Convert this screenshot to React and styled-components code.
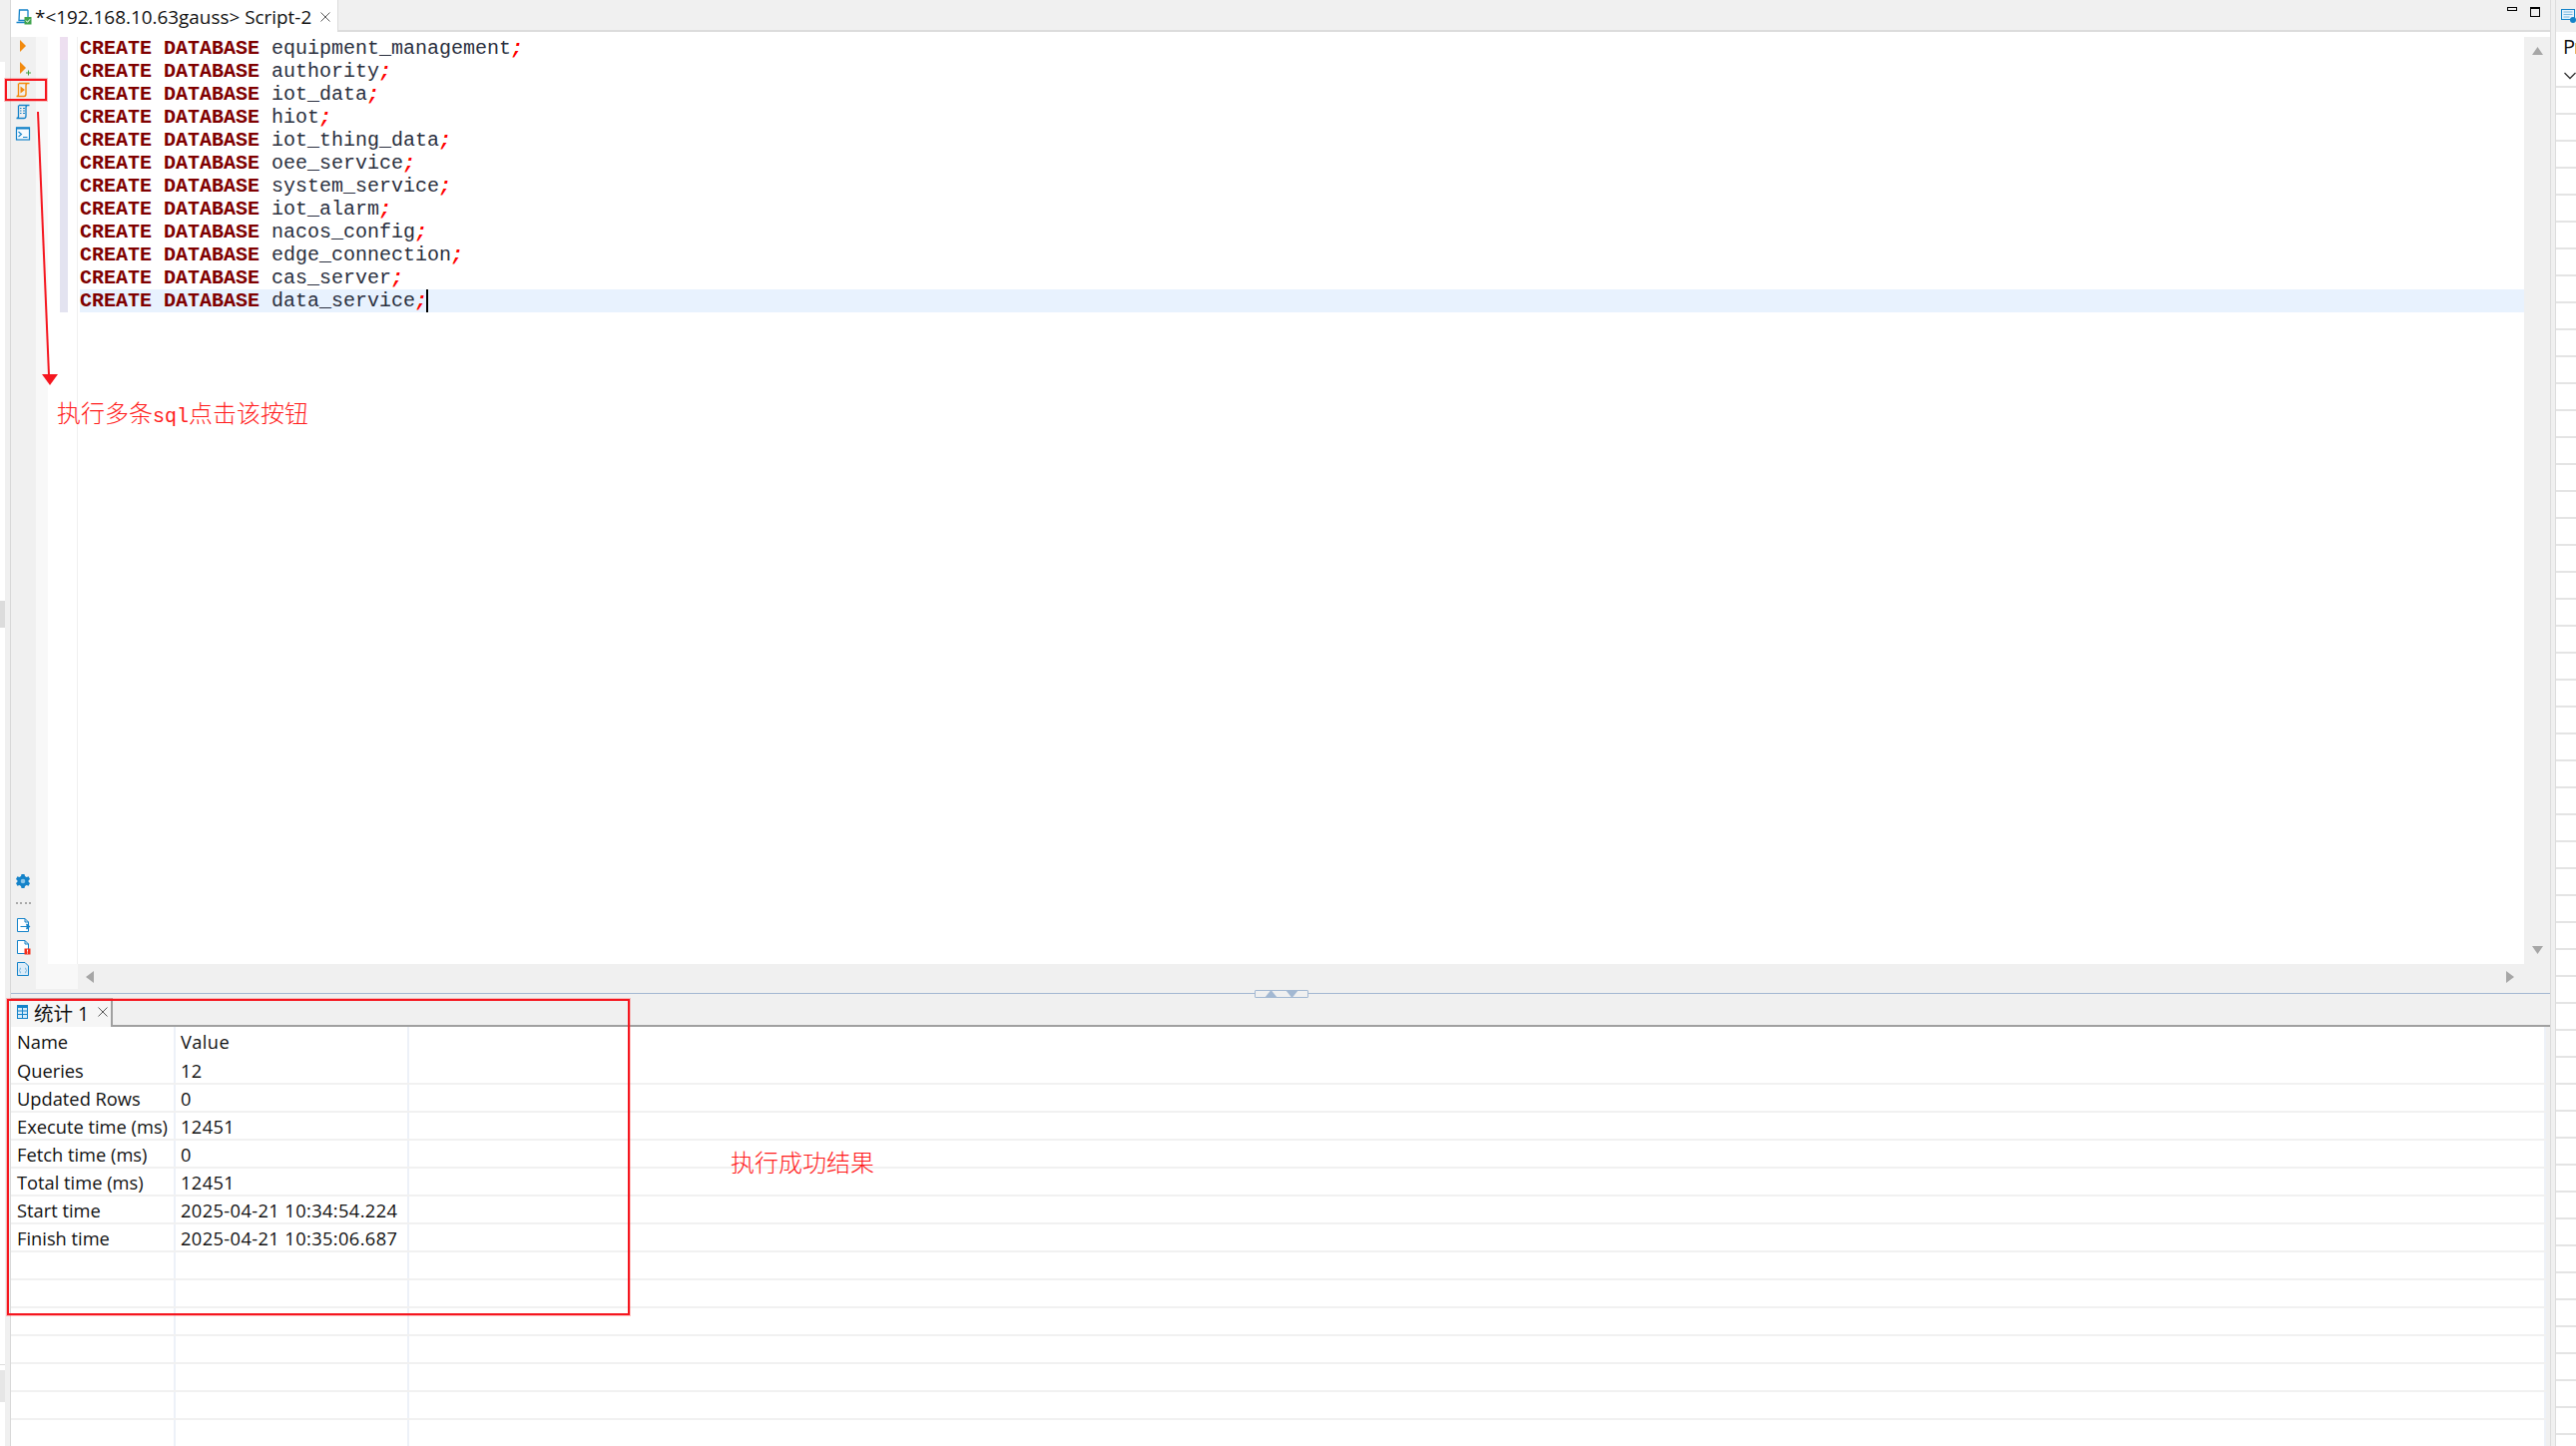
import React from "react";
import styled, { createGlobalStyle } from "styled-components";

const GlobalStyle = createGlobalStyle`
  html, body {
    margin: 0;
    padding: 0;
    background: #fff;
  }
  #root {
    width: 2581px;
    height: 1449px;
  }
`;

const UI_FONT = `"Open Sans", "Noto Sans CJK SC", sans-serif`;

const Page = styled.div`
  position: relative;
  display: flex;
  width: 2581px;
  height: 1449px;
  overflow: hidden;
  background: #fff;
  font-family: ${UI_FONT};
  color: #111;
`;

/* left window edge */
const LeftEdge = styled.div`
  display: flex;
  flex: 0 0 11px;
  box-sizing: border-box;
  background: #f0f0f0;
  border-right: 1px solid #d8d8d8;
`;
const EdgeTabs = styled.div`
  display: flex;
  flex-direction: column;
  flex: 0 0 5px;
  background: #fff;
`;
const EdgeTop = styled.div`
  height: 62px;
  background: #f0f0f0;
`;
const EdgeTab = styled.div`
  height: ${(p) => p.$h}px;
  margin-top: ${(p) => p.$top}px;
  background: ${(p) => p.$color};
  border-top: ${(p) => (p.$ruled ? "1px solid #dcdcdc" : "none")};
`;

/* main column */
const Main = styled.div`
  display: flex;
  flex-direction: column;
  flex: 0 0 2544px;
  height: 1449px;
`;

const TabBar = styled.div`
  display: flex;
  height: 32px;
  box-sizing: border-box;
  background: #f0f0f0;
  border-bottom: 2px solid #dcdcdc;
`;
const ScriptTab = styled.div`
  display: flex;
  align-items: center;
  width: 328px;
  height: 32px;
  box-sizing: border-box;
  padding: 1px 0 0 5px;
  background: #fff;
  border-right: 1px solid #dcdcdc;
  font-size: 18.9px;
  white-space: nowrap;
  span {
    margin-left: 3px;
  }
  svg:last-child {
    margin-left: 9px;
  }
`;
const WindowButtons = styled.div`
  display: flex;
  align-items: flex-start;
  gap: 13px;
  margin-left: auto;
  padding: 7px 10px 0 0;
`;
const MinButton = styled.i`
  display: block;
  width: 10px;
  height: 4px;
  box-sizing: border-box;
  border: 1px solid #000;
`;
const MaxButton = styled.i`
  display: block;
  width: 10px;
  height: 10px;
  box-sizing: border-box;
  border: 1px solid #000;
  border-top-width: 2px;
`;

const EditorBody = styled.div`
  display: flex;
  height: 958px;
  margin-top: 5px;
`;
const Toolbar = styled.div`
  display: flex;
  flex-direction: column;
  align-items: center;
  flex: 0 0 25px;
  gap: 6px;
  box-sizing: border-box;
  padding: 1px 1px 16px 0;
  background: #f0f0f0;
`;
const ToolIcon = styled.svg`
  display: block;
  width: 16px;
  height: 16px;
  flex: none;
`;
const BottomTools = styled.div`
  display: flex;
  flex-direction: column;
  align-items: center;
  gap: 6px;
  margin-top: auto;
`;
const Dots = styled.div`
  width: 15px;
  height: 2px;
  margin: 7px 0 7px;
  background: repeating-linear-gradient(90deg, #a8a8a8 0 2px, transparent 2px 4.4px);
`;

const EditorColumn = styled.div`
  display: flex;
  flex-direction: column;
  flex: 1;
  min-width: 0;
`;
const EditorArea = styled.div`
  display: flex;
  height: 929px;
`;
const Ruler = styled.div`
  flex: 0 0 12px;
  background: #f8f8f8;
`;
const Annotations = styled.div`
  flex: 0 0 29px;
  box-sizing: border-box;
  padding-left: 12px;
  background: #fff;
`;
const Marker = styled.div`
  width: 8px;
  height: ${(p) => p.$h}px;
  background: ${(p) => p.$color};
`;
const Code = styled.div`
  flex: 1;
  min-width: 0;
  box-sizing: border-box;
  padding-left: 2px;
  background: #fff;
  border-left: 1px solid #f0f0f0;
  font-family: "Liberation Mono", monospace;
  font-size: 20px;
  line-height: 23px;
  color: #2b3040;
`;
const CodeLine = styled.div`
  display: flex;
  height: 23px;
  white-space: pre;
  background: ${(p) => (p.$current ? "#e8f2fe" : "transparent")};
`;
const Keyword = styled.b`
  font-weight: 700;
  color: #7f0000;
`;
const Semi = styled.b`
  font-weight: 700;
  font-style: italic;
  color: #ff0000;
`;
const Caret = styled.i`
  width: 2px;
  height: 23px;
  margin-left: -1px;
  background: #000;
`;
const VScroll = styled.div`
  display: flex;
  flex-direction: column;
  align-items: center;
  justify-content: space-between;
  flex: 0 0 26px;
  box-sizing: border-box;
  padding: 10px 0 10px;
  background: #f0f0f0;
`;
const HBar = styled.div`
  display: flex;
  height: 29px;
  background: #f0f0f0;
`;
const HCorner = styled.div`
  flex: 0 0 42px;
  height: 25px;
  background: #f8f8f8;
`;
const HTrack = styled.div`
  display: flex;
  align-items: center;
  justify-content: space-between;
  flex: 0 0 2451px;
  box-sizing: border-box;
  padding: 0 10px 0 8px;
  height: 26px;
`;

const Sash = styled.div`
  position: relative;
  height: 1px;
  background: #a3b8d2;
  flex: none;
`;
const SashHandle = styled.div`
  position: absolute;
  left: 1246px;
  top: -3px;
  display: flex;
  align-items: center;
  justify-content: space-around;
  width: 54px;
  height: 8px;
  box-sizing: border-box;
  padding: 0 5px;
  background: #f0f0f0;
  border: 1px solid #a3b8d2;
  border-radius: 1px;
`;

const ResultTabs = styled.div`
  display: flex;
  align-items: flex-end;
  flex: none;
  height: 33px;
  box-sizing: border-box;
  background: #f0f0f0;
  border-bottom: 2px solid #a0a0a0;
`;
const ResultTab = styled.div`
  display: flex;
  align-items: center;
  width: 102px;
  height: 29px;
  margin-bottom: -2px;
  box-sizing: border-box;
  padding: 0 0 2px 6px;
  background: #f6f6f6;
  border-top: 1px solid #b4b4b4;
  border-right: 2px solid #a0a0a0;
  font-size: 19.5px;
  white-space: nowrap;
  span {
    margin-left: 6px;
  }
  svg:last-child {
    margin-left: 9px;
  }
`;

const ResultPane = styled.div`
  flex: 1;
  min-height: 0;
  overflow: hidden;
  background: #f0f0f0;
`;
const Table = styled.div`
  width: 2540px;
  height: 100%;
  background: #fff;
  font-size: 18.3px;
  color: #111;
`;
const Row = styled.div`
  display: grid;
  grid-template-columns: 165px 234px 1fr;
  height: ${(p) => (p.$head ? 30 : 28)}px;
  line-height: ${(p) => (p.$head ? 30 : 27)}px;
  box-sizing: border-box;
  border-bottom: ${(p) => (p.$head ? "none" : "2px solid #f1f1f1")};
`;
const Cell = styled.div`
  box-sizing: border-box;
  padding-left: 6px;
  border-right: 2px solid #edf1f8;
  white-space: nowrap;
  overflow: hidden;
`;
const ValueCell = styled(Cell)`
  padding-left: 5px;
  letter-spacing: 0.38px;
`;

/* thin divider and right view */
const Divider = styled.div`
  flex: 0 0 5px;
  box-sizing: border-box;
  background: #f0f0f0;
  border-left: 1px solid #dcdcdc;
`;
const RightPanel = styled.div`
  flex: 1;
  min-width: 0;
  overflow: hidden;
  box-sizing: border-box;
  border-left: 1px solid #dcdcdc;
`;
const RightHeader = styled.div`
  display: flex;
  justify-content: flex-end;
  height: 32px;
  box-sizing: border-box;
  padding-top: 8px;
  background: #f0f0f0;
`;
const RightTitle = styled.div`
  height: 29px;
  box-sizing: border-box;
  padding-left: 7px;
  font-size: 20px;
  letter-spacing: -1px;
  line-height: 29px;
  white-space: nowrap;
  overflow: hidden;
`;
const Chevron = styled.div`
  display: flex;
  height: 27px;
  box-sizing: border-box;
  padding: 11px 0 0 8px;
  border-bottom: 2px solid #e4e4e4;
`;
const PropRow = styled.div`
  height: 27px;
  box-sizing: border-box;
  border-bottom: 2px solid #e4e4e4;
`;

/* red annotations drawn over the screenshot */
const RedBox = styled.div`
  position: absolute;
  left: ${(p) => p.$x}px;
  top: ${(p) => p.$y}px;
  width: ${(p) => p.$w}px;
  height: ${(p) => p.$h}px;
  box-sizing: border-box;
  border: 2px solid #f5161f;
  box-shadow: 0 0 0 1px rgba(255, 60, 60, 0.3);
  pointer-events: none;
`;
const ArrowOverlay = styled.svg`
  position: absolute;
  left: 30px;
  top: 105px;
`;
const Note = styled.div`
  position: absolute;
  left: ${(p) => p.$x}px;
  top: ${(p) => p.$y}px;
  font-family: "Noto Sans CJK SC", sans-serif;
  font-size: 24px;
  font-weight: 300;
  line-height: 30px;
  color: #ff1c1c;
  white-space: nowrap;
`;
const NoteLatin = styled.span`
  font-family: "Liberation Mono", monospace;
  font-size: 20px;
`;

const databases = [
  "equipment_management",
  "authority",
  "iot_data",
  "hiot",
  "iot_thing_data",
  "oee_service",
  "system_service",
  "iot_alarm",
  "nacos_config",
  "edge_connection",
  "cas_server",
  "data_service",
];

const stats = [
  ["Queries", "12"],
  ["Updated Rows", "0"],
  ["Execute time (ms)", "12451"],
  ["Fetch time (ms)", "0"],
  ["Total time (ms)", "12451"],
  ["Start time", "2025-04-21 10:34:54.224"],
  ["Finish time", "2025-04-21 10:35:06.687"],
  ["", ""],
  ["", ""],
  ["", ""],
  ["", ""],
  ["", ""],
  ["", ""],
  ["", ""],
];

const BLUE = "#1583c9";
const ORANGE = "#f28a0e";

function RunIcon({ plus }) {
  return (
    <ToolIcon viewBox="0 0 16 16">
      <path d="M5 2 L11 8 L5 14 Z" fill={ORANGE} />
      {plus && <path d="M11 13h5M13.5 10.500v5" stroke="#3f9f3f" strokeWidth="1" fill="none" />}
    </ToolIcon>
  );
}

function ScriptRunIcon() {
  return (
    <ToolIcon viewBox="0 0 16 16">
      <path d="M4 1.500h10.500M12.500 1.500c-1.500 0-1.500 1.500-1.500 2.500v8c0 1.500-1 2.500-2 2.500H1.500c1 0 2-.5 2-2V1.500" stroke={ORANGE} strokeWidth="1.400" fill="none" />
      <path d="M5.500 4.500 L10 8 L5.500 11.500 Z" fill={ORANGE} />
    </ToolIcon>
  );
}

function ScriptIcon() {
  return (
    <ToolIcon viewBox="0 0 16 16">
      <path d="M4 1.500h10.500M12.500 1.500c-1.500 0-1.500 1.500-1.500 2.500v8c0 1.500-1 2.500-2 2.500H1.500c1 0 2-.5 2-2V1.500" stroke={BLUE} strokeWidth="1.300" fill="none" />
      <path d="M5 4.500h1.500M8 4.500h2M5 7h1.500M8 7h2M5 9.500h1.500M8 9.500h2" stroke={BLUE} strokeWidth="1" />
    </ToolIcon>
  );
}

function TerminalIcon() {
  return (
    <ToolIcon viewBox="0 0 16 16">
      <rect x="1.500" y="2" width="13" height="12" fill="#f7fbff" stroke={BLUE} strokeWidth="1.200" />
      <rect x="1" y="1.500" width="14" height="2" fill={BLUE} />
      <path d="M3.500 6l3 2.500-3 2.500M8 11.500h4.500" stroke={BLUE} strokeWidth="1.100" fill="none" />
    </ToolIcon>
  );
}

function GearIcon() {
  return (
    <ToolIcon viewBox="0 0 16 16">
      <path
        d="M6.500 1h3l.5 2 1.600.9 2-.6 1.400 2.600-1.400 1.400v1.400l1.400 1.400-1.400 2.600-2-.6-1.600.9-.5 2h-3l-.5-2-1.600-.9-2 .6L1 10.100l1.400-1.400V7.300L1 5.900l1.400-2.600 2 .6L6 3z"
        fill={BLUE}
      />
      <circle cx="8" cy="8" r="2.300" fill="#8cc6ea" />
    </ToolIcon>
  );
}

function DocShape() {
  return <path d="M2.500 1.500h7.500l3.500 3.500v9.500h-11z M10 1.500v3.500h3.500" fill="#fff" stroke={BLUE} strokeWidth="1" />;
}

function DocArrowIcon() {
  return (
    <ToolIcon viewBox="0 0 16 16">
      <DocShape />
      <path d="M5.500 9.500h9M11.500 7l3 2.500-3 2.500" stroke={BLUE} strokeWidth="1.200" fill={BLUE} />
    </ToolIcon>
  );
}

function DocErrorIcon() {
  return (
    <ToolIcon viewBox="0 0 16 16">
      <DocShape />
      <rect x="9.500" y="9.500" width="6" height="6" fill="#f3301d" />
      <path d="M12.500 10.500v2.200M12.500 13.500v1" stroke="#fff" strokeWidth="1" />
    </ToolIcon>
  );
}

function DocBracesIcon() {
  return (
    <ToolIcon viewBox="0 0 16 16">
      <path d="M2.500 1.500h7.500l3.500 3.500v9.500h-11z" fill="#dcecf8" stroke={BLUE} strokeWidth="1" />
      <path d="M6 7c-1.500 0-.5 2-1.500 2.500C5.500 10 4.500 12 6 12M10 7c1.500 0 .5 2 1.500 2.500-1 .5 0 2.500-1.500 2.500" stroke="#6fb2e0" strokeWidth="1" fill="none" />
    </ToolIcon>
  );
}

function ScriptTabIcon() {
  return (
    <svg width="16" height="16" viewBox="0 0 16 16">
      <path d="M3.500 1h8l.5.5v10H3z" fill="#fff" stroke={BLUE} strokeWidth="1.300" />
      <path d="M0.500 13.500h10" stroke={BLUE} strokeWidth="1.500" />
      <rect x="8.500" y="8" width="7" height="7.500" fill="#3fa34d" />
      <path d="M10 11.500l1.500 1.800 2.500-3" stroke="#fff" strokeWidth="1" fill="none" />
    </svg>
  );
}

function CloseIcon() {
  return (
    <svg width="10" height="10" viewBox="0 0 10 10">
      <path d="M.5.500l9 9M9.500.500l-9 9" stroke="#444" strokeWidth="0.900" />
    </svg>
  );
}

function GridIcon() {
  return (
    <svg width="11" height="14" viewBox="0 0 11 14">
      <rect width="11" height="14" fill={BLUE} />
      <path d="M1 3h4v2.500H1zM6 3h4v2.500H6zM1 6.500h4V9H1zM6 6.500h4V9H6zM1 10h4v3H1zM6 10h4v3H6z" fill="#d8ecfa" />
    </svg>
  );
}

function Triangle({ dir, size = 11, color = "#a6a6a6" }) {
  const shapes = {
    up: "M0 8 L5.500 0 L11 8 Z",
    down: "M0 0 L11 0 L5.500 8 Z",
    left: "M8 0 L8 11 L0 5.500 Z",
    right: "M0 0 L8 5.500 L0 11 Z",
  };
  const horizontal = dir === "left" || dir === "right";
  return (
    <svg
      width={horizontal ? 8 : size}
      height={horizontal ? size : 8}
      viewBox={horizontal ? "0 0 8 11" : "0 0 11 8"}
      preserveAspectRatio="none"
    >
      <path d={shapes[dir]} fill={color} />
    </svg>
  );
}

function SqlLine({ name, current }) {
  return (
    <CodeLine $current={current}>
      <Keyword>CREATE DATABASE</Keyword>
      {` ${name}`}
      <Semi>;</Semi>
      {current && <Caret />}
    </CodeLine>
  );
}

export default function App() {
  return (
    <Page>
      <GlobalStyle />
      <LeftEdge>
        <EdgeTabs>
          <EdgeTop />
          <EdgeTab $top={540} $h={27} $color="#dcdcdc" />
          <EdgeTab $top={738} $h={5} $color="#fff" $ruled />
          <EdgeTab $top={0} $h={32} $color="#e6e6e6" />
        </EdgeTabs>
      </LeftEdge>

      <Main>
        <TabBar>
          <ScriptTab>
            <ScriptTabIcon />
            <span>*&lt;192.168.10.63gauss&gt; Script-2</span>
            <CloseIcon />
          </ScriptTab>
          <WindowButtons>
            <MinButton />
            <MaxButton />
          </WindowButtons>
        </TabBar>

        <EditorBody>
          <Toolbar>
            <RunIcon />
            <RunIcon plus />
            <ScriptRunIcon />
            <ScriptIcon />
            <TerminalIcon />
            <BottomTools>
              <GearIcon />
              <Dots />
              <DocArrowIcon />
              <DocErrorIcon />
              <DocBracesIcon />
            </BottomTools>
          </Toolbar>
          <EditorColumn>
            <EditorArea>
              <Ruler />
              <Annotations>
                <Marker $h={23} $color="#eddff0" />
                <Marker $h={253} $color="#e3e3f0" />
              </Annotations>
              <Code>
                {databases.map((name, i) => (
                  <SqlLine key={name} name={name} current={i === databases.length - 1} />
                ))}
              </Code>
              <VScroll>
                <Triangle dir="up" />
                <Triangle dir="down" />
              </VScroll>
            </EditorArea>
            <HBar>
              <HCorner />
              <HTrack>
                <Triangle dir="left" size={12} />
                <Triangle dir="right" size={12} />
              </HTrack>
            </HBar>
          </EditorColumn>
        </EditorBody>

        <Sash>
          <SashHandle>
            <Triangle dir="up" size={13} color="#a3b8d2" />
            <Triangle dir="down" size={13} color="#a3b8d2" />
          </SashHandle>
        </Sash>

        <ResultTabs>
          <ResultTab>
            <GridIcon />
            <span>统计 1</span>
            <CloseIcon />
          </ResultTab>
        </ResultTabs>

        <ResultPane>
          <Table>
            <Row $head>
              <Cell>Name</Cell>
              <ValueCell>Value</ValueCell>
              <Cell />
            </Row>
            {stats.map(([name, value], i) => (
              <Row key={i}>
                <Cell>{name}</Cell>
                <ValueCell>{value}</ValueCell>
                <Cell />
              </Row>
            ))}
          </Table>
        </ResultPane>
      </Main>

      <Divider />

      <RightPanel>
        <RightHeader>
          <svg width="15" height="15" viewBox="0 0 15 15">
            <rect x="0.500" y="1.500" width="13" height="10" fill="#e6f2fb" stroke={BLUE} />
            <path d="M2.500 4h9M2.500 6.500h9M2.500 9h6" stroke="#7ab8e2" />
            <circle cx="12" cy="12" r="3" fill={BLUE} />
          </svg>
        </RightHeader>
        <RightTitle>Pr</RightTitle>
        <Chevron>
          <svg width="12" height="8" viewBox="0 0 12 8">
            <path d="M.5 1l5.500 5.500L11.500 1" stroke="#333" strokeWidth="1.300" fill="none" />
          </svg>
        </Chevron>
        {Array.from({ length: 50 }, (_, i) => (
          <PropRow key={i} />
        ))}
      </RightPanel>

      <RedBox $x={5} $y={79} $w={42} $h={22} />
      <RedBox $x={7} $y={1001} $w={624} $h={317} />
      <ArrowOverlay width="32" height="285" viewBox="0 0 32 285">
        <path d="M8 7 L19 271" stroke="#f5161f" strokeWidth="2" fill="none" />
        <path d="M12 270 L28 270 L20 281 Z" fill="#f5161f" />
      </ArrowOverlay>
      <Note $x={57} $y={398}>
        执行多条<NoteLatin>sql</NoteLatin>点击该按钮
      </Note>
      <Note $x={732} $y={1149}>执行成功结果</Note>
    </Page>
  );
}
